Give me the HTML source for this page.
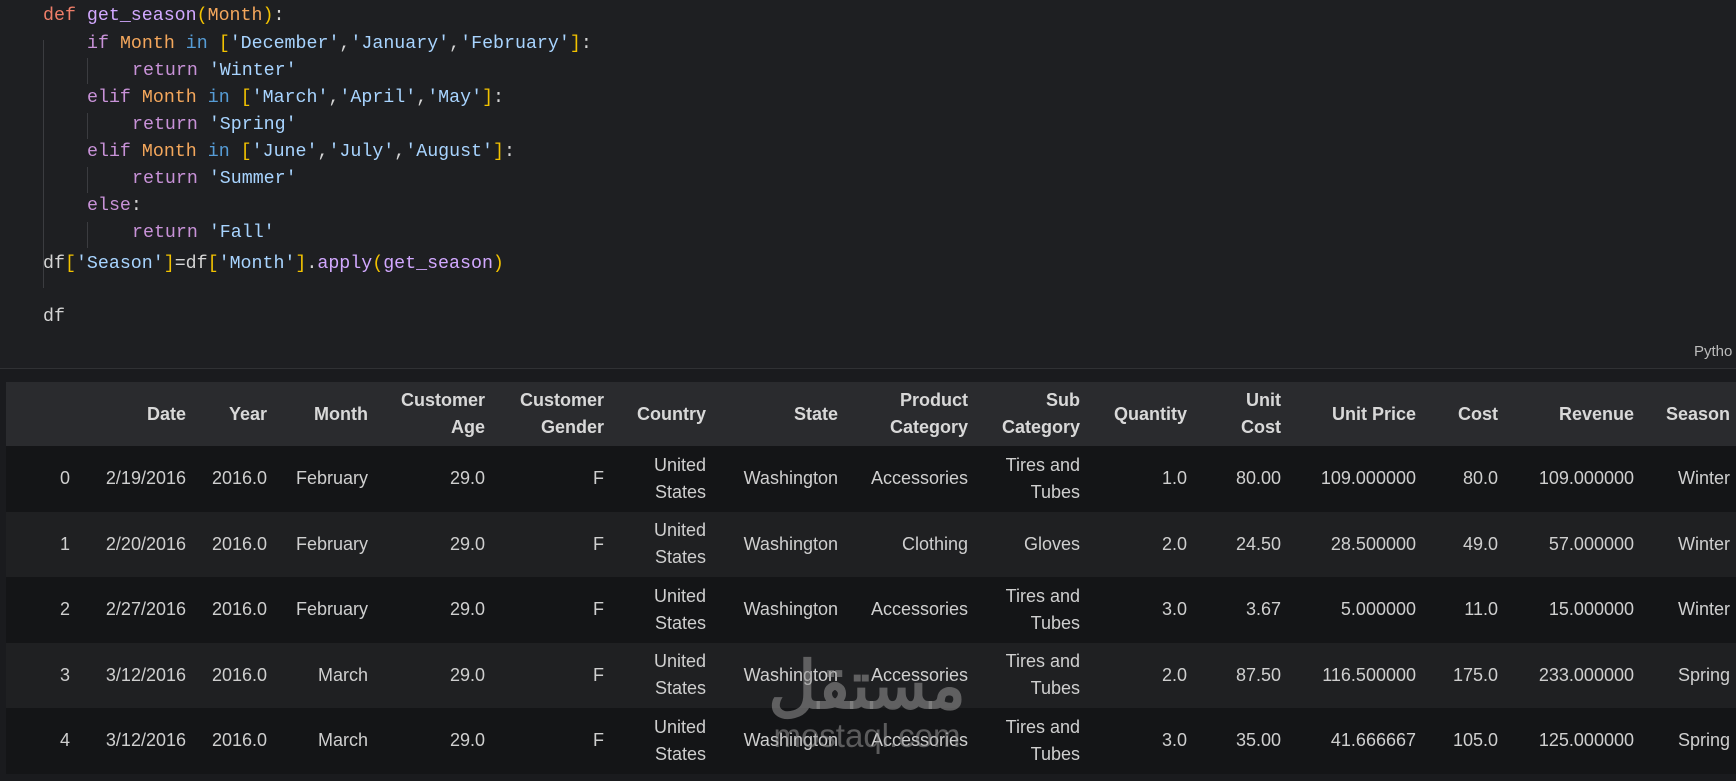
<!DOCTYPE html>
<html><head><style>
body{margin:0;width:1736px;height:781px;background:#1a1b1e;overflow:hidden;position:relative;font-family:"Liberation Sans",sans-serif}
.code{position:absolute;left:0;top:0;width:1736px;height:368px;background:#1e1f22}
.ln{position:absolute;font-family:"Liberation Mono",monospace;font-size:18.3px;white-space:pre;color:#d4d4d4;line-height:27px}
.g{position:absolute;width:1px;background:#3b3c40}
.k{color:#ef7e69}.f{color:#d2a8ff}.p{color:#f4a75c}.c{color:#c892d8}.i{color:#569cd6}.s{color:#a8d4ff}.b{color:#f2c200}
.sep{position:absolute;left:0;top:368px;width:1736px;height:1px;background:#303134}
.py{position:absolute;left:1694px;top:343px;font-size:15px;color:#bbb}
table{position:absolute;left:6px;top:382px;border-collapse:collapse;table-layout:fixed;width:1732px;font-size:18px;color:#cfcfcf}
td,th{text-align:right;padding:0 8px 0 0;line-height:27px}
th{font-weight:bold;color:#d8d8d8;height:64px;background:#2a2b2e}
tr.o td{background:#141517;height:65.5px}
tr.e td{background:#1f2022;height:65.5px}
.wm{position:absolute;left:754px;top:652px;color:rgba(150,150,150,.55);font-weight:bold;text-align:center;width:226px}
</style></head><body>
<div class="code">
<div class="g" style="left:43px;top:40px;height:248px"></div>
<div class="g" style="left:87px;top:58px;height:26px"></div>
<div class="g" style="left:87px;top:113px;height:26px"></div>
<div class="g" style="left:87px;top:167px;height:26px"></div>
<div class="g" style="left:87px;top:222px;height:26px"></div>
<div class="ln" style="left:43px;top:3px"><span class="k">def</span> <span class="f">get_season</span><span class="b">(</span><span class="p">Month</span><span class="b">)</span>:</div>
<div class="ln" style="left:87px;top:31px"><span class="c">if</span> <span class="p">Month</span> <span class="i">in</span> <span class="b">[</span><span class="s">'December'</span>,<span class="s">'January'</span>,<span class="s">'February'</span><span class="b">]</span>:</div>
<div class="ln" style="left:132px;top:58px"><span class="c">return</span> <span class="s">'Winter'</span></div>
<div class="ln" style="left:87px;top:85px"><span class="c">elif</span> <span class="p">Month</span> <span class="i">in</span> <span class="b">[</span><span class="s">'March'</span>,<span class="s">'April'</span>,<span class="s">'May'</span><span class="b">]</span>:</div>
<div class="ln" style="left:132px;top:112px"><span class="c">return</span> <span class="s">'Spring'</span></div>
<div class="ln" style="left:87px;top:139px"><span class="c">elif</span> <span class="p">Month</span> <span class="i">in</span> <span class="b">[</span><span class="s">'June'</span>,<span class="s">'July'</span>,<span class="s">'August'</span><span class="b">]</span>:</div>
<div class="ln" style="left:132px;top:166px"><span class="c">return</span> <span class="s">'Summer'</span></div>
<div class="ln" style="left:87px;top:193px"><span class="c">else</span>:</div>
<div class="ln" style="left:132px;top:220px"><span class="c">return</span> <span class="s">'Fall'</span></div>
<div class="ln" style="left:43px;top:251px">df<span class="b">[</span><span class="s">'Season'</span><span class="b">]</span>=df<span class="b">[</span><span class="s">'Month'</span><span class="b">]</span>.<span class="f">apply</span><span class="b">(</span><span class="f">get_season</span><span class="b">)</span></div>
<div class="ln" style="left:43px;top:304px">df</div>
</div>
<div class="py">Pytho</div>
<div class="sep"></div>
<table>
<colgroup><col style="width:72px"><col style="width:116px"><col style="width:81px"><col style="width:101px"><col style="width:117px"><col style="width:119px"><col style="width:102px"><col style="width:132px"><col style="width:130px"><col style="width:112px"><col style="width:107px"><col style="width:94px"><col style="width:135px"><col style="width:82px"><col style="width:136px"><col style="width:96px"></colgroup>
<tr><th></th><th>Date</th><th>Year</th><th>Month</th><th>Customer<br>Age</th><th>Customer<br>Gender</th><th>Country</th><th>State</th><th>Product<br>Category</th><th>Sub<br>Category</th><th>Quantity</th><th>Unit<br>Cost</th><th>Unit Price</th><th>Cost</th><th>Revenue</th><th>Season</th></tr>
<tr class="o"><td>0</td><td>2/19/2016</td><td>2016.0</td><td>February</td><td>29.0</td><td>F</td><td>United<br>States</td><td>Washington</td><td>Accessories</td><td>Tires and<br>Tubes</td><td>1.0</td><td>80.00</td><td>109.000000</td><td>80.0</td><td>109.000000</td><td>Winter</td></tr>
<tr class="e"><td>1</td><td>2/20/2016</td><td>2016.0</td><td>February</td><td>29.0</td><td>F</td><td>United<br>States</td><td>Washington</td><td>Clothing</td><td>Gloves</td><td>2.0</td><td>24.50</td><td>28.500000</td><td>49.0</td><td>57.000000</td><td>Winter</td></tr>
<tr class="o"><td>2</td><td>2/27/2016</td><td>2016.0</td><td>February</td><td>29.0</td><td>F</td><td>United<br>States</td><td>Washington</td><td>Accessories</td><td>Tires and<br>Tubes</td><td>3.0</td><td>3.67</td><td>5.000000</td><td>11.0</td><td>15.000000</td><td>Winter</td></tr>
<tr class="e"><td>3</td><td>3/12/2016</td><td>2016.0</td><td>March</td><td>29.0</td><td>F</td><td>United<br>States</td><td>Washington</td><td>Accessories</td><td>Tires and<br>Tubes</td><td>2.0</td><td>87.50</td><td>116.500000</td><td>175.0</td><td>233.000000</td><td>Spring</td></tr>
<tr class="o"><td>4</td><td>3/12/2016</td><td>2016.0</td><td>March</td><td>29.0</td><td>F</td><td>United<br>States</td><td>Washington</td><td>Accessories</td><td>Tires and<br>Tubes</td><td>3.0</td><td>35.00</td><td>41.666667</td><td>105.0</td><td>125.000000</td><td>Spring</td></tr>
</table>
<div class="wm"><div style="font-family:'Liberation Sans','Noto Sans CJK SC',sans-serif;font-size:66px;line-height:66px">مستقل</div><div style="font-size:33px;line-height:36px;font-weight:normal">mostaql.com</div></div>
</body></html>
